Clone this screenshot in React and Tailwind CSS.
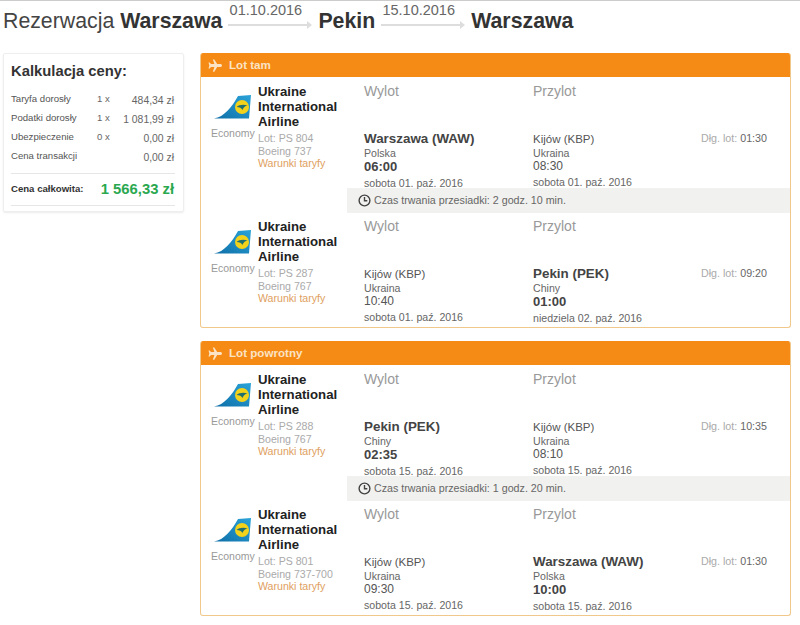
const font = 'font-["Liberation_Sans",Arial,sans-serif]';

function Logo() {
  return (
    <svg width="38" height="25" viewBox="0 0 38 25" className="block">
      <defs>
        <linearGradient id="tail" x1="0" y1="1" x2="1" y2="0">
          <stop offset="0" stopColor="#0f6fa8" />
          <stop offset="1" stopColor="#2aa3d8" />
        </linearGradient>
      </defs>
      <path d="M0 23.5 C10 22 18 12 24 1 L37 0 L35 23.5 Z" fill="url(#tail)" />
      <circle cx="28" cy="12" r="7" fill="#f2d21b" />
      <path d="M22.5 12 C25 9.5 30 9 33.5 10.5 C31 11 29.5 12.5 28.5 15 C27.5 13 25.5 12 22.5 12 Z" fill="#1f6f6f" />
    </svg>
  );
}

function PlaneIcon() {
  return (
    <svg width="14" height="13" viewBox="0 0 16 14" fill="#fbe3c4">
      <path d="M5.5 0 H7.2 L10.5 5.3 H14 C15.2 5.3 16 6 16 7 C16 8 15.2 8.7 14 8.7 H10.5 L7.2 14 H5.5 L7.3 8.7 H3.4 L2 10.4 H0.6 L1.5 7 L0.6 3.6 H2 L3.4 5.3 H7.3 Z" />
    </svg>
  );
}

function ClockIcon() {
  return (
    <svg width="13" height="13" viewBox="0 0 13 13" fill="none" stroke="#444" strokeWidth="1.4">
      <circle cx="6.5" cy="6.5" r="5.4" />
      <path d="M6.5 3 V6.8 H9.3" />
    </svg>
  );
}

function RouteArrow({ date }) {
  return (
    <div className="mx-[6px] flex w-[84px] flex-col">
      <div className="-mt-[6px] h-[19px] pr-[9px] text-center text-[14.5px] leading-[19px] text-[#666]">{date}</div>
      <div className="mt-[1px] flex items-center">
        <div className="h-[2px] flex-1 bg-[#ddd]" />
        <div className="h-0 w-0 border-y-[4px] border-l-[5px] border-y-transparent border-l-[#ddd]" />
      </div>
    </div>
  );
}

function Place({ label, place, strong, country, time, date, className }) {
  return (
    <div className={`shrink-0 ${className}`}>
      <div className="h-[16px] text-[14px] leading-[16px] text-[#999]">{label}</div>
      <div className={`mt-[32px] h-[16px] leading-[16px] ${strong ? 'text-[13.4px] font-bold text-[#444]' : 'text-[11.5px] text-[#555]'}`}>{place}</div>
      <div className="h-[13px] text-[10.6px] leading-[13px] text-[#666]">{country}</div>
      <div className={`h-[14px] leading-[14px] ${strong ? 'text-[13px] font-bold text-[#444]' : '-mt-[1px] mb-[1px] text-[12px] text-[#555]'}`}>{time}</div>
      <div className="mt-[2px] h-[14px] text-[10.6px] leading-[14px] text-[#666]">{date}</div>
    </div>
  );
}

function Segment({ s, className }) {
  return (
    <div className={`flex ${className}`}>
      <div className="w-[57px] shrink-0 pl-[10px] pt-[18px]">
        <div className="ml-[3px]"><Logo /></div>
        <div className="mt-[7px] text-[10.5px] leading-[13px] text-[#999]">Economy</div>
      </div>
      <div className="w-[106px] shrink-0 pt-[7px]">
        <div className="text-[13.2px] font-bold leading-[15px] text-[#222]">
          Ukraine<br />International<br />Airline
        </div>
        <div className="mt-[3px] text-[10.6px] leading-[12.5px] text-[#aaa]">Lot: {s.flight}</div>
        <div className="text-[10.6px] leading-[12.5px] text-[#aaa]">{s.plane}</div>
        <div className="text-[10.6px] leading-[12.5px] text-[#e0a060]">Warunki taryfy</div>
      </div>
      <div className="flex pt-[6px]">
        <Place label="Wylot" className="w-[169px]" {...s.from} />
        <Place label="Przylot" className="w-[168px]" {...s.to} />
      </div>
      <div className="pt-[54px] text-[10.7px] leading-[14px] text-[#aaa]">
        Dłg. lot: <span className="text-[#666]">{s.duration}</span>
      </div>
    </div>
  );
}

function Layover({ text }) {
  return (
    <div className="ml-[146px] flex h-[25px] items-center gap-[3px] bg-[#f1f1ef] pl-[11px] text-[10.7px] text-[#666]">
      <ClockIcon />
      <span>{text}</span>
    </div>
  );
}

function FlightPanel({ title, first, second, layover }) {
  return (
    <div className="overflow-hidden rounded-[3px] border border-t-0 border-[#f0c88c]">
      <div className="-mx-px flex h-[24px] items-center bg-[#f58a14] pl-[8px] text-[11.6px] font-bold text-[#fbe3c4]">
        <PlaneIcon />
        <span className="ml-[7px]">{title}</span>
      </div>
      <Segment s={first} className="h-[111px]" />
      <Layover text={layover} />
      <Segment s={second} className="-mt-px h-[115px]" />
    </div>
  );
}

const sobota = 'sobota 01. paź. 2016';
const sobota15 = 'sobota 15. paź. 2016';

const outbound = {
  first: {
    flight: 'PS 804', plane: 'Boeing 737', duration: '01:30',
    from: { place: 'Warszawa (WAW)', strong: true, country: 'Polska', time: '06:00', date: sobota },
    to: { place: 'Kijów (KBP)', country: 'Ukraina', time: '08:30', date: sobota },
  },
  second: {
    flight: 'PS 287', plane: 'Boeing 767', duration: '09:20',
    from: { place: 'Kijów (KBP)', country: 'Ukraina', time: '10:40', date: sobota },
    to: { place: 'Pekin (PEK)', strong: true, country: 'Chiny', time: '01:00', date: 'niedziela 02. paź. 2016' },
  },
  layover: 'Czas trwania przesiadki: 2 godz. 10 min.',
};

const inbound = {
  first: {
    flight: 'PS 288', plane: 'Boeing 767', duration: '10:35',
    from: { place: 'Pekin (PEK)', strong: true, country: 'Chiny', time: '02:35', date: sobota15 },
    to: { place: 'Kijów (KBP)', country: 'Ukraina', time: '08:10', date: sobota15 },
  },
  second: {
    flight: 'PS 801', plane: 'Boeing 737-700', duration: '01:30',
    from: { place: 'Kijów (KBP)', country: 'Ukraina', time: '09:30', date: sobota15 },
    to: { place: 'Warszawa (WAW)', strong: true, country: 'Polska', time: '10:00', date: sobota15 },
  },
  layover: 'Czas trwania przesiadki: 1 godz. 20 min.',
};

const prices = [
  ['Taryfa dorosły', '1 x', '484,34 zł'],
  ['Podatki dorosły', '1 x', '1 081,99 zł'],
  ['Ubezpieczenie', '0 x', '0,00 zł'],
  ['Cena transakcji', '', '0,00 zł'],
];

function PriceBox() {
  return (
    <div className="h-[159px] w-[181px] rounded-[2px] border border-[#eee] pl-[7px] pr-[8px] pt-[7px] shadow-[0_1px_2px_rgba(0,0,0,0.08)]">
      <div className="text-[14.8px] font-bold leading-[20px] text-[#333]">Kalkulacja ceny:</div>
      <div className="mt-[10px] border-b border-[#e6e6e6] pb-[6px]">
        {prices.map(([name, count, value]) => (
          <div key={name} className="flex h-[19px] items-center">
            <span className="-mt-[3px] w-[86px] text-[9.6px] text-[#555]">{name}</span>
            <span className="-mt-[3px] w-[20px] text-[9.6px] text-[#666]">{count}</span>
            <span className="flex-1 pr-[1px] text-right text-[10.4px] text-[#666]">{value}</span>
          </div>
        ))}
      </div>
      <div className="flex h-[32px] items-center justify-between border-b border-[#e6e6e6]">
        <span className="text-[9.6px] font-bold text-[#333]">Cena całkowita:</span>
        <span className="pr-[1px] text-[14.8px] font-bold text-[#2aa84f]">1 566,33 zł</span>
      </div>
    </div>
  );
}

export default function App() {
  return (
    <div className={`h-[625px] w-[800px] overflow-hidden border-t border-[#ccc] bg-white ${font}`}>
      <div className="flex h-[52px] items-start pl-[3px] pt-[6px] text-[21.3px] leading-[28px] text-[#444]">
        <span>Rezerwacja&nbsp;</span>
        <b className="text-[#333]">Warszawa</b>
        <RouteArrow date="01.10.2016" />
        <b className="text-[#333]">Pekin</b>
        <RouteArrow date="15.10.2016" />
        <b className="text-[#333]">Warszawa</b>
      </div>
      <div className="flex items-start pl-[3px]">
        <PriceBox />
        <div className="ml-[16px] flex w-[591px] flex-col gap-[13px]">
          <FlightPanel title="Lot tam" {...outbound} />
          <FlightPanel title="Lot powrotny" {...inbound} />
        </div>
      </div>
    </div>
  );
}
